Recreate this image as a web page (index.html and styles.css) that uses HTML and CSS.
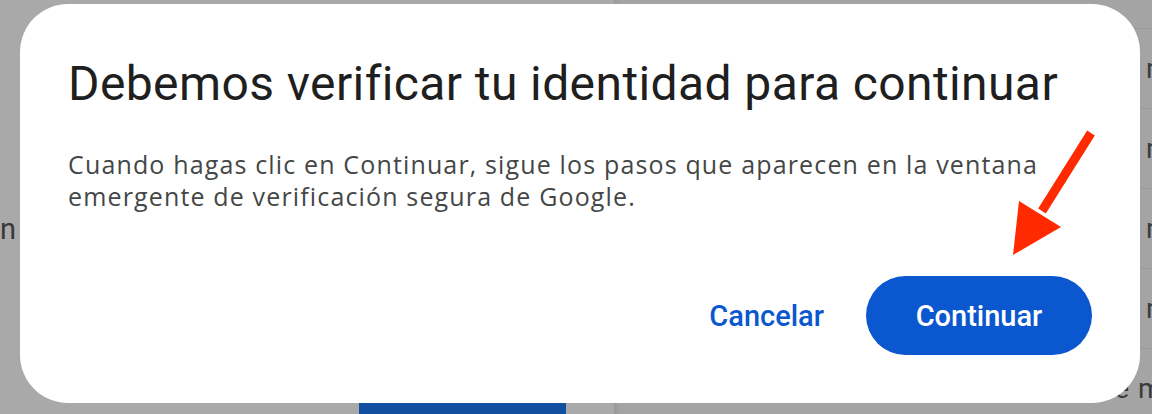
FILE: index.html
```html
<!DOCTYPE html>
<html lang="es">
<head>
	<meta charset="utf-8">
	<title>Verificar identidad</title>
	<link rel="stylesheet" href="styles.css">
</head>
<body>

	<div class="app">
		<div class="pane-left">
			<div class="left-row">n</div>
			<div class="left-actions">
				<span class="left-button"></span>
			</div>
		</div>
		<div class="pane-right">
			<div class="row"><span class="cell-a"></span><span class="cell-b">m</span></div>
			<div class="row"><span class="cell-a"></span><span class="cell-b">m</span></div>
			<div class="row"><span class="cell-a"></span><span class="cell-b">m</span></div>
			<div class="row"><span class="cell-a"></span><span class="cell-b">m</span></div>
			<div class="row row-last"><span class="cell-a">Cliente</span><span class="cell-b">m</span></div>
		</div>
	</div>

	<div class="scrim">
		<div class="dialog" role="dialog">
			<h1 class="dialog-title">Debemos verificar tu identidad para continuar</h1>
			<p class="dialog-text">Cuando hagas clic en Continuar, sigue los pasos que aparecen en la ventana emergente de verificación segura de Google.</p>
			<div class="dialog-actions">
				<button type="button" class="btn-text">Cancelar</button>
				<button type="button" class="btn-filled">Continuar</button>
			</div>
		</div>
	</div>

	<svg class="arrow" width="1152" height="414" viewBox="0 0 1152 414">
		<line x1="1091" y1="133" x2="1042" y2="211" stroke="#ff2a00" stroke-width="9"/>
		<polygon points="1013,255 1019,201 1061,227" fill="#ff2a00"/>
	</svg>

</body>
</html>
```

FILE: styles.css
```css
body {
	margin:0;
	background:#a9a9a9;
	font-family:Roboto, "Liberation Sans", Arial, sans-serif;
	overflow:hidden;
}

/* ----------- page behind the scrim ----------- */
.app {
	display:flex;
	height:414px;
}

.pane-left {
	flex:none;
	width:614px;
	display:flex;
	flex-direction:column;
	color:#383838;
	font-size:29px;
}

.left-row {
	margin-top:212px;
	line-height:34px;
}

.left-actions {
	margin-top:auto;
	padding-left:359px;
}

.left-button {
	display:block;
	width:207px;
	height:11px;
	background:#134fa0;
}

.pane-right {
	flex:1;
	min-width:0;
	border-left:solid 1px #989898;
	box-shadow:inset 5px 0 4px -3px #9a9a9a;
	background:#a4a4a4;
	padding-top:28px;
	font-size:28px;
	color:#3a3a3a;
}

.row {
	display:flex;
	align-items:center;
	height:79px;
	border-top:solid 1px #9b9b9b;
	white-space:nowrap;
	overflow:hidden;
}

.cell-a {
	flex:none;
	width:531px;
	text-align:right;
	padding-right:9px;
	box-sizing:border-box;
}

.row-last .cell-a {
	padding-right:17px;
}

.row-last .cell-b {
	margin-left:-8px;
}

/* ----------- dialog ----------- */
.scrim {
	position:fixed;
	top:0;
	left:0;
	right:0;
	bottom:0;
	display:flex;
	padding:4px 12px 11px 20px;
}

.dialog {
	flex:1;
	background:#fff;
	border-radius:48px;
	padding:52px 48px 48px 48px;
	display:flex;
	flex-direction:column;
}

.dialog-title {
	margin:0;
	font-size:48px;
	font-weight:400;
	letter-spacing:0.4px;
	line-height:56px;
	color:#1f1f1f;
}

.dialog-text {
	margin:36px 0 0 0;
	font-family:"Open Sans", Roboto, sans-serif;
	font-size:25px;
	letter-spacing:1.15px;
	line-height:32px;
	color:#444746;
}

.dialog-actions {
	margin-top:auto;
	display:flex;
	justify-content:flex-end;
	align-items:center;
	gap:18px;
}

.dialog-actions button {
	border:0;
	height:79px;
	font-family:inherit;
	font-size:29px;
	font-weight:500;
	border-radius:40px;
}

.btn-text {
	background:none;
	color:#0b57d0;
	padding:0 24px;
}

.btn-filled {
	width:226px;
	background:#0b57d0;
	color:#fff;
}

.arrow {
	position:fixed;
	top:0;
	left:0;
}
```
